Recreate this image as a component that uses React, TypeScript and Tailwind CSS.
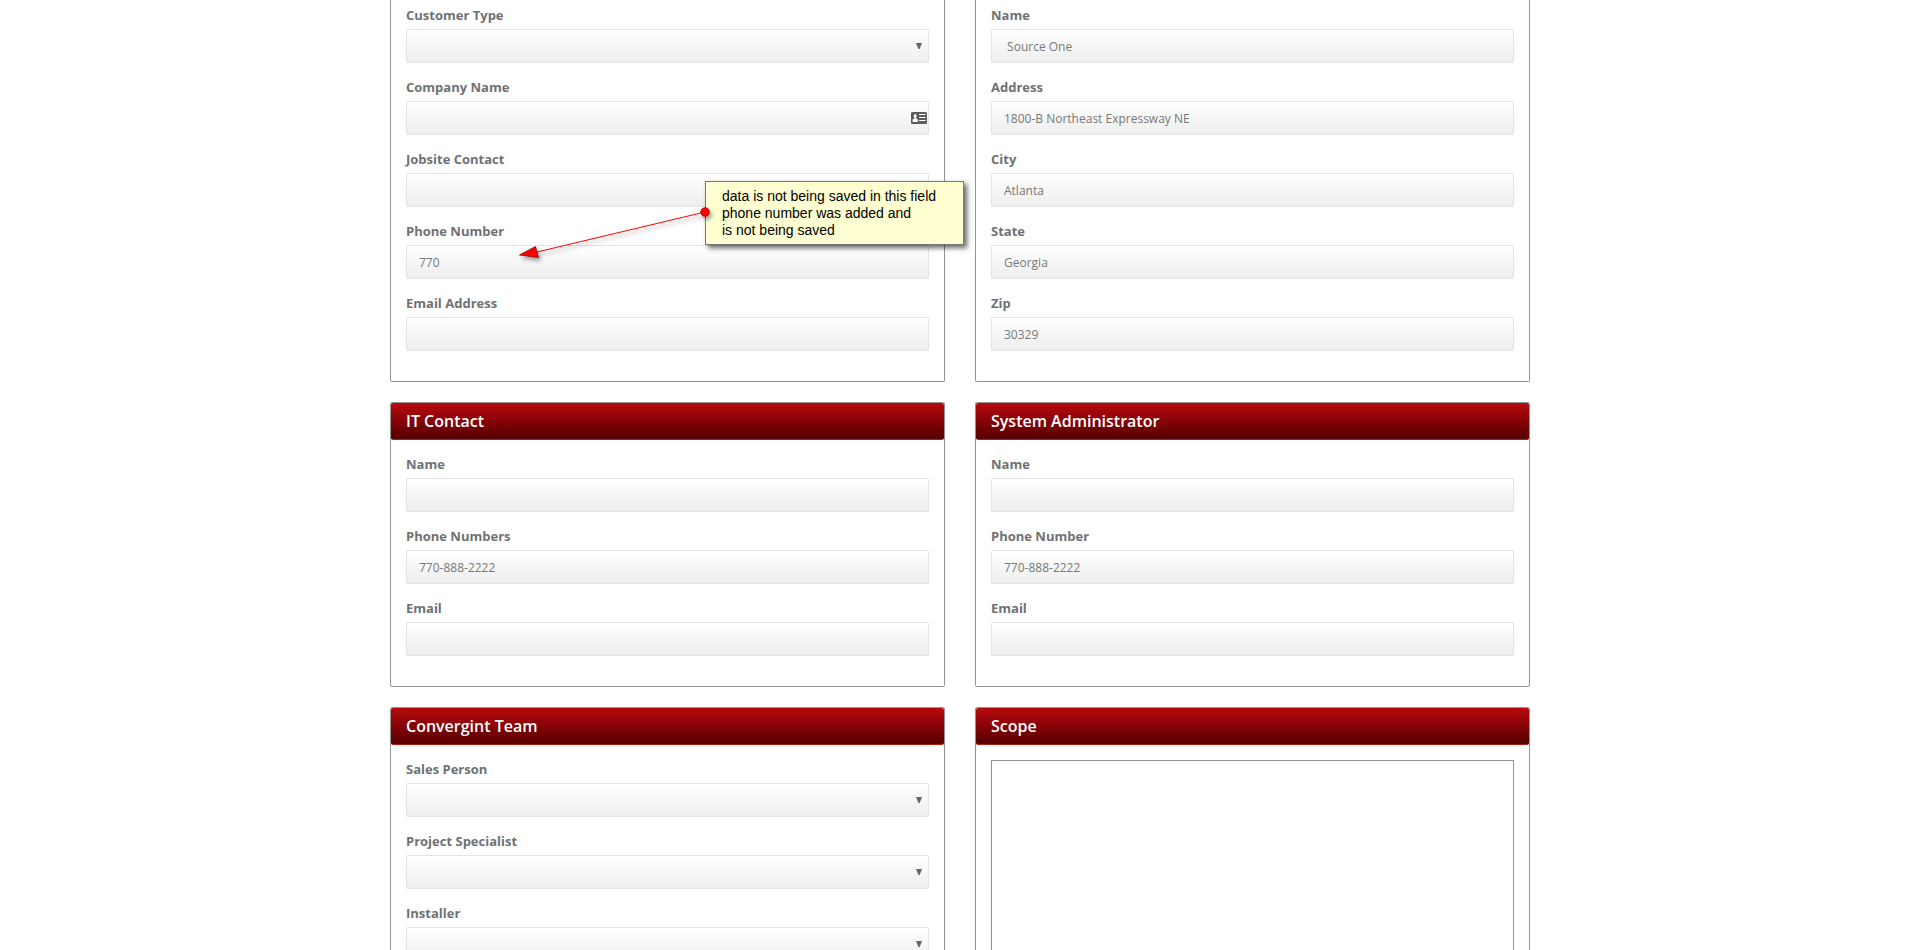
import type { ReactNode } from "react";

const controlClass =
  "block h-[34px] w-full appearance-none rounded-xs border border-[#e4e4e4] bg-linear-to-b from-white to-[#eeeeee] px-3 text-xs text-[#777777] outline-none";

function Field({ id, label, children }: { id: string; label: string; children: ReactNode }) {
  return (
    <div className="mb-[15px]">
      <label htmlFor={id} className="mb-[5px] block text-[13px] leading-[18px] font-bold text-[#6f7174]">
        {label}
      </label>
      <div className="relative">{children}</div>
    </div>
  );
}

function TextField({ id, label, value = "", icon }: { id: string; label: string; value?: string; icon?: ReactNode }) {
  return (
    <Field id={id} label={label}>
      <input id={id} type="text" defaultValue={value} className={controlClass} />
      {icon}
    </Field>
  );
}

function SelectField({ id, label }: { id: string; label: string }) {
  return (
    <Field id={id} label={label}>
      <select id={id} defaultValue="" className={controlClass}>
        <option value=""></option>
      </select>
      <svg viewBox="0 0 6 6" className="pointer-events-none absolute top-[14px] right-[7px] h-[6px] w-[6px]" fill="#666666">
        <path d="M0 0H6L3.6 6H2.4Z" />
      </svg>
    </Field>
  );
}

function ContactCardIcon() {
  return (
    <svg viewBox="0 0 16 12" className="pointer-events-none absolute top-[11px] right-[2px] h-3 w-4">
      <rect width="16" height="12" rx="1.5" fill="#5c5c5c" />
      <circle cx="4.2" cy="3.8" r="1.6" fill="#fff" />
      <path d="M3.3 5H5.1V6.4L6.8 7.4V10H1.6V7.4L3.3 6.4Z" fill="#fff" />
      <path d="M8 2.5H14.5M8 5.5H14.5M8 8.5H14.5" stroke="#fff" strokeWidth="1" />
    </svg>
  );
}

function Panel({ title, children }: { title: string; children: ReactNode }) {
  return (
    <section className="rounded-xs border border-[#949494] bg-white">
      <h2 className="rounded-xs border-b border-[#b01c10] bg-linear-to-b from-[#b90a0d] to-[#560003] px-[15px] text-base leading-9 font-semibold text-white">
        {title}
      </h2>
      <div className="p-[15px]">{children}</div>
    </section>
  );
}

function Annotation() {
  return (
    <div className="pointer-events-none absolute top-[181px] left-[315px]">
      <p className="w-[259px] border border-[#777777] bg-[#ffffd2] pt-[6px] pb-[5px] pl-4 font-['Liberation_Sans',sans-serif] text-sm leading-[17px] text-black shadow-[3px_3px_5px_rgba(0,0,0,0.6)]">
        data is not being saved in this field
        <br />
        phone number was added and
        <br />
        is not being saved
      </p>
      <svg
        viewBox="0 0 200 60"
        className="absolute top-[21px] left-[-190px] h-[60px] w-[200px] drop-shadow-[2px_3px_2px_rgba(0,0,0,0.4)]"
      >
        <path d="M190 10L22 50" stroke="#ff0000" strokeWidth="1" />
        <path d="M4.5 53L20.5 44.5L23.5 55.5Z" fill="#ff0000" stroke="#8c0000" strokeWidth="0.8" />
        <circle cx="190" cy="10" r="4.3" fill="#ff0000" stroke="#a00000" strokeWidth="0.8" />
      </svg>
    </div>
  );
}

export default function App() {
  return (
    <main className="h-screen overflow-hidden bg-white font-['Open_Sans',sans-serif]">
      <div className="relative mx-auto grid max-w-[1140px] grid-cols-2 gap-x-[30px] gap-y-5">
        <section className="rounded-b-xs border border-t-0 border-[#949494] px-[15px] pt-[6px] pb-[15px]">
          <SelectField id="customer-type" label="Customer Type" />
          <TextField id="company-name" label="Company Name" icon={<ContactCardIcon />} />
          <TextField id="jobsite-contact" label="Jobsite Contact" />
          <TextField id="customer-phone" label="Phone Number" value="770" />
          <TextField id="customer-email" label="Email Address" />
        </section>
        <section className="rounded-b-xs border border-t-0 border-[#949494] px-[15px] pt-[6px] pb-[15px]">
          <TextField id="site-name" label="Name" value=" Source One" />
          <TextField id="site-address" label="Address" value="1800-B Northeast Expressway NE" />
          <TextField id="site-city" label="City" value="Atlanta" />
          <TextField id="site-state" label="State" value="Georgia" />
          <TextField id="site-zip" label="Zip" value="30329" />
        </section>

        <Panel title="IT Contact">
          <TextField id="it-name" label="Name" />
          <TextField id="it-phone" label="Phone Numbers" value="770-888-2222" />
          <TextField id="it-email" label="Email" />
        </Panel>
        <Panel title="System Administrator">
          <TextField id="admin-name" label="Name" />
          <TextField id="admin-phone" label="Phone Number" value="770-888-2222" />
          <TextField id="admin-email" label="Email" />
        </Panel>

        <Panel title="Convergint Team">
          <SelectField id="sales-person" label="Sales Person" />
          <SelectField id="project-specialist" label="Project Specialist" />
          <SelectField id="installer" label="Installer" />
        </Panel>
        <Panel title="Scope">
          <textarea
            aria-label="Scope"
            rows={10}
            className="block w-full resize-none border border-[#949494] p-2 text-xs leading-5 text-[#777777] outline-none"
          />
        </Panel>

        <Annotation />
      </div>
    </main>
  );
}
